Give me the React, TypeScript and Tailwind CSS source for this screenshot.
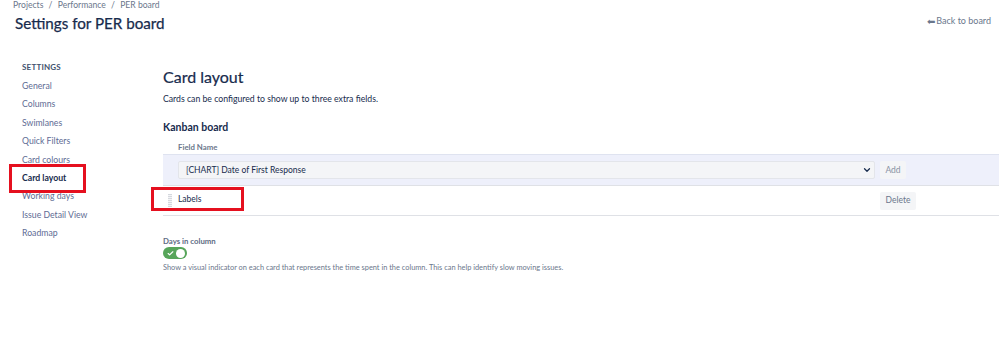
import { ChevronDown, Check } from 'lucide-react';

const navItems = [
  'General',
  'Columns',
  'Swimlanes',
  'Quick Filters',
  'Card colours',
  'Card layout',
  'Working days',
  'Issue Detail View',
  'Roadmap',
];

export default function App() {
  return (
    <div
      className="relative w-[999px] h-[350px] bg-white overflow-hidden text-[#172b4d]"
      style={{ fontFamily: 'Lato, "Open Sans", sans-serif' }}
    >
      {/* Header */}
      <div className="flex items-start justify-between pl-[13px] pr-[8px]">
        <div>
          <div className="text-[8.6px] leading-[11px] text-[#6b778c]">
            Projects <span className="mx-[3px]">/</span> Performance <span className="mx-[3px]">/</span> PER board
          </div>
          <h1 className="mt-[2px] ml-[2px] text-[15.2px] leading-[20px] font-normal [-webkit-text-stroke:0.25px_#172b4d] text-[#172b4d]">
            Settings for PER board
          </h1>
        </div>
        <a className="mt-[15px] flex items-center gap-[1px] text-[9px] leading-[12px] text-[#6b778c]">
          <span className="text-[10px] leading-[12px]">&#x2B05;</span>
          Back to board
        </a>
      </div>

      <div className="flex mt-[27px]">
        {/* Sidebar */}
        <nav className="w-[163px] shrink-0 pl-[22px] pt-[2px]">
          <div className="text-[8px] leading-[10px] font-bold tracking-[0.2px] text-[#42526e] mb-[5px]">SETTINGS</div>
          <ul>
            {navItems.map((item) => (
              <li
                key={item}
                className={`text-[8.7px] leading-[18.4px] ${
                  item === 'Card layout' ? 'font-bold text-[#172b4d]' : 'text-[#5e6c94]'
                }`}
              >
                {item}
              </li>
            ))}
          </ul>
        </nav>

        {/* Main */}
        <main className="flex-1 pt-[6px]">
          <h2 className="text-[16px] leading-[22px] font-normal [-webkit-text-stroke:0.2px_#172b4d] text-[#172b4d]">Card layout</h2>
          <p className="mt-[5px] text-[8.7px] leading-[12px] text-[#172b4d]">
            Cards can be configured to show up to three extra fields.
          </p>
          <h3 className="mt-[15px] text-[10.5px] leading-[14px] font-bold text-[#172b4d]">Kanban board</h3>
          <div className="mt-[8px] pl-[15px] text-[7.8px] leading-[10px] font-bold text-[#6b778c]">Field Name</div>

          <div className="mt-[2px]">
            <div className="h-[32px] flex items-center bg-[#eef0fb] border-t border-[#dfe3f0] border-b border-b-[#dfe1e6] pl-[15px] pr-[10px]">
              <div className="w-[697px] h-[18px] flex items-center justify-between bg-[#f4f5f7] border border-[#e3e5ea] rounded-[2px] pl-[7px] pr-[2px]">
                <span className="text-[8.5px] leading-[12px] text-[#172b4d]">[CHART] Date of First Response</span>
                <ChevronDown className="w-[10px] h-[10px] text-[#172b4d]" strokeWidth={3} />
              </div>
              <button className="ml-[5px] h-[18px] w-[26px] rounded-[2px] bg-[#f4f5f7] text-[8.5px] text-[#8993a4]">
                Add
              </button>
            </div>
            <div className="h-[30px] flex items-center border-b border-[#dfe1e6] pl-[5px]">
              <div className="w-[4px] h-[13px] mr-[6px] bg-[repeating-linear-gradient(0deg,#d5d8de_0px,#d5d8de_1px,#f4f5f7_1px,#f4f5f7_2px)]" />
              <span className="w-[697px] text-[8.5px] leading-[12px] text-[#172b4d] -mt-[3px]">Labels</span>
              <button className="ml-[5px] h-[18px] w-[36px] rounded-[2px] bg-[#f4f5f7] text-[8.5px] text-[#6b778c]">
                Delete
              </button>
            </div>
          </div>

          <div className="mt-[20px] text-[7.8px] leading-[10px] font-bold text-[#5e6c84]">Days in column</div>
          <div className="mt-[1px] w-[24px] h-[12px] rounded-full bg-[#57a55a] flex items-center justify-between px-[2px]">
            <Check className="w-[7px] h-[7px] text-white ml-[2px]" strokeWidth={4} />
            <div className="w-[9px] h-[9px] rounded-full bg-white" />
          </div>
          <p className="mt-[4px] text-[7.4px] leading-[10px] text-[#6b778c]">
            Show a visual indicator on each card that represents the time spent in the column. This can help identify slow moving issues.
          </p>
        </main>
      </div>

      {/* Annotation boxes */}
      <div className="absolute left-[9px] top-[164px] w-[77px] h-[29px] border-[3px] border-[#e5101f]" />
      <div className="absolute left-[151px] top-[187px] w-[93px] h-[24px] border-[3px] border-[#e5101f]" />
    </div>
  );
}
